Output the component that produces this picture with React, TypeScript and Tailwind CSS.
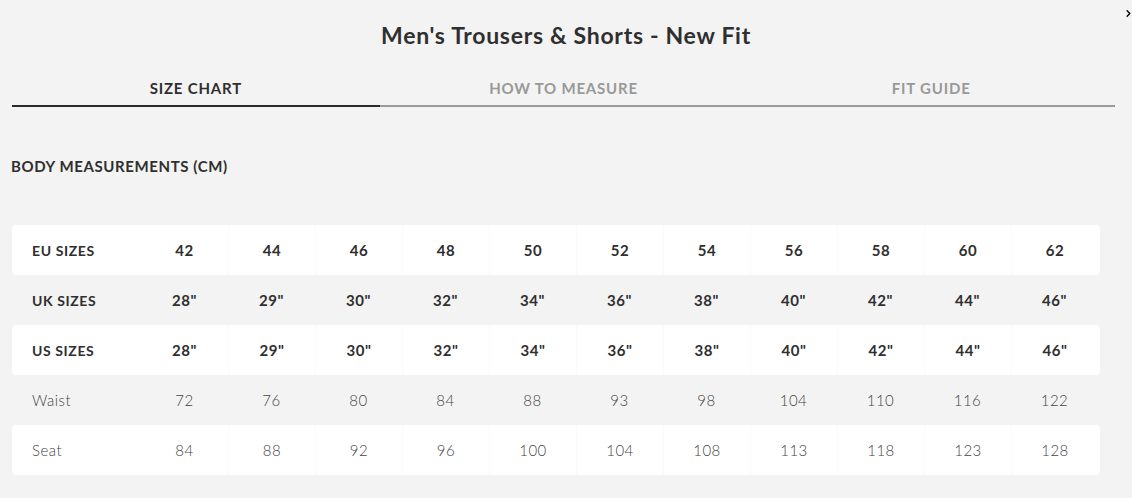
import { ChevronRight } from "lucide-react";

const sizes = {
  eu: ["42", "44", "46", "48", "50", "52", "54", "56", "58", "60", "62"],
  uk: ['28"', '29"', '30"', '32"', '34"', '36"', '38"', '40"', '42"', '44"', '46"'],
  us: ['28"', '29"', '30"', '32"', '34"', '36"', '38"', '40"', '42"', '44"', '46"'],
  waist: ["72", "76", "80", "84", "88", "93", "98", "104", "110", "116", "122"],
  seat: ["84", "88", "92", "96", "100", "104", "108", "113", "118", "123", "128"],
};

const rows = [
  { label: "EU SIZES", values: sizes.eu, head: true, white: true },
  { label: "UK SIZES", values: sizes.uk, head: true, white: false },
  { label: "US SIZES", values: sizes.us, head: true, white: true },
  { label: "Waist", values: sizes.waist, head: false, white: false },
  { label: "Seat", values: sizes.seat, head: false, white: true },
];

const tabs = ["SIZE CHART", "HOW TO MEASURE", "FIT GUIDE"];

export default function App() {
  return (
    <div className="relative w-[1132px] h-[498px] overflow-hidden bg-[#f3f3f3] font-['Lato',sans-serif] text-[#333]">
      {/* Close / next arrow */}
      <ChevronRight className="absolute left-[1123px] top-[8px] size-[11px] text-black" strokeWidth={3} />

      {/* Title */}
      <h1 className="pt-[19px] text-center text-[23px] font-bold leading-[32px] tracking-[0.7px] text-[#2f2f2f]">
        Men's Trousers &amp; Shorts - New Fit
      </h1>

      {/* Tabs */}
      <div className="ml-[12px] mr-[17px] mt-[26px] flex">
        {tabs.map((tab, i) => (
          <div
            key={tab}
            className={
              i === 0
                ? "flex-1 border-b-2 border-[#2a2a2a] pb-[6px] text-center text-[15px] font-bold leading-[22px] tracking-[0.8px] text-[#2f2f2f]"
                : "flex-1 border-b-2 border-[#9a9a9a] pb-[6px] text-center text-[15px] font-bold leading-[22px] tracking-[0.8px] text-[#999]"
            }
          >
            {tab}
          </div>
        ))}
      </div>

      {/* Section heading */}
      <h2 className="ml-[11px] mt-[48px] text-[15px] font-bold leading-[22px] tracking-[0.6px] text-[#2f2f2f]">
        BODY MEASUREMENTS (CM)
      </h2>

      {/* Table */}
      <div className="ml-[12px] mt-[48px] w-[1088px]">
        {rows.map((row) => (
          <div
            key={row.label}
            className={
              row.white
                ? "flex h-[50px] items-center rounded-[4px] bg-white"
                : "flex h-[50px] items-center"
            }
          >
            <div
              className={
                row.head
                  ? "w-[129px] pl-[20px] text-[14px] font-bold tracking-[0.6px] text-[#2f2f2f]"
                  : "w-[129px] pl-[20px] text-[15px] font-light tracking-[0.5px] text-[#444]"
              }
            >
              {row.label}
            </div>
            {row.values.map((v, i) => (
              <div
                key={i}
                className={
                  (i > 0 && row.white ? "border-l border-[#fafafa] " : "") +
                  (row.head
                    ? "flex h-full w-[87px] items-center justify-center text-[15px] font-bold tracking-[0.5px] text-[#2f2f2f]"
                    : "flex h-full w-[87px] items-center justify-center text-[15px] font-light tracking-[0.5px] text-[#444]")
                }
              >
                {v}
              </div>
            ))}
          </div>
        ))}
      </div>
    </div>
  );
}
